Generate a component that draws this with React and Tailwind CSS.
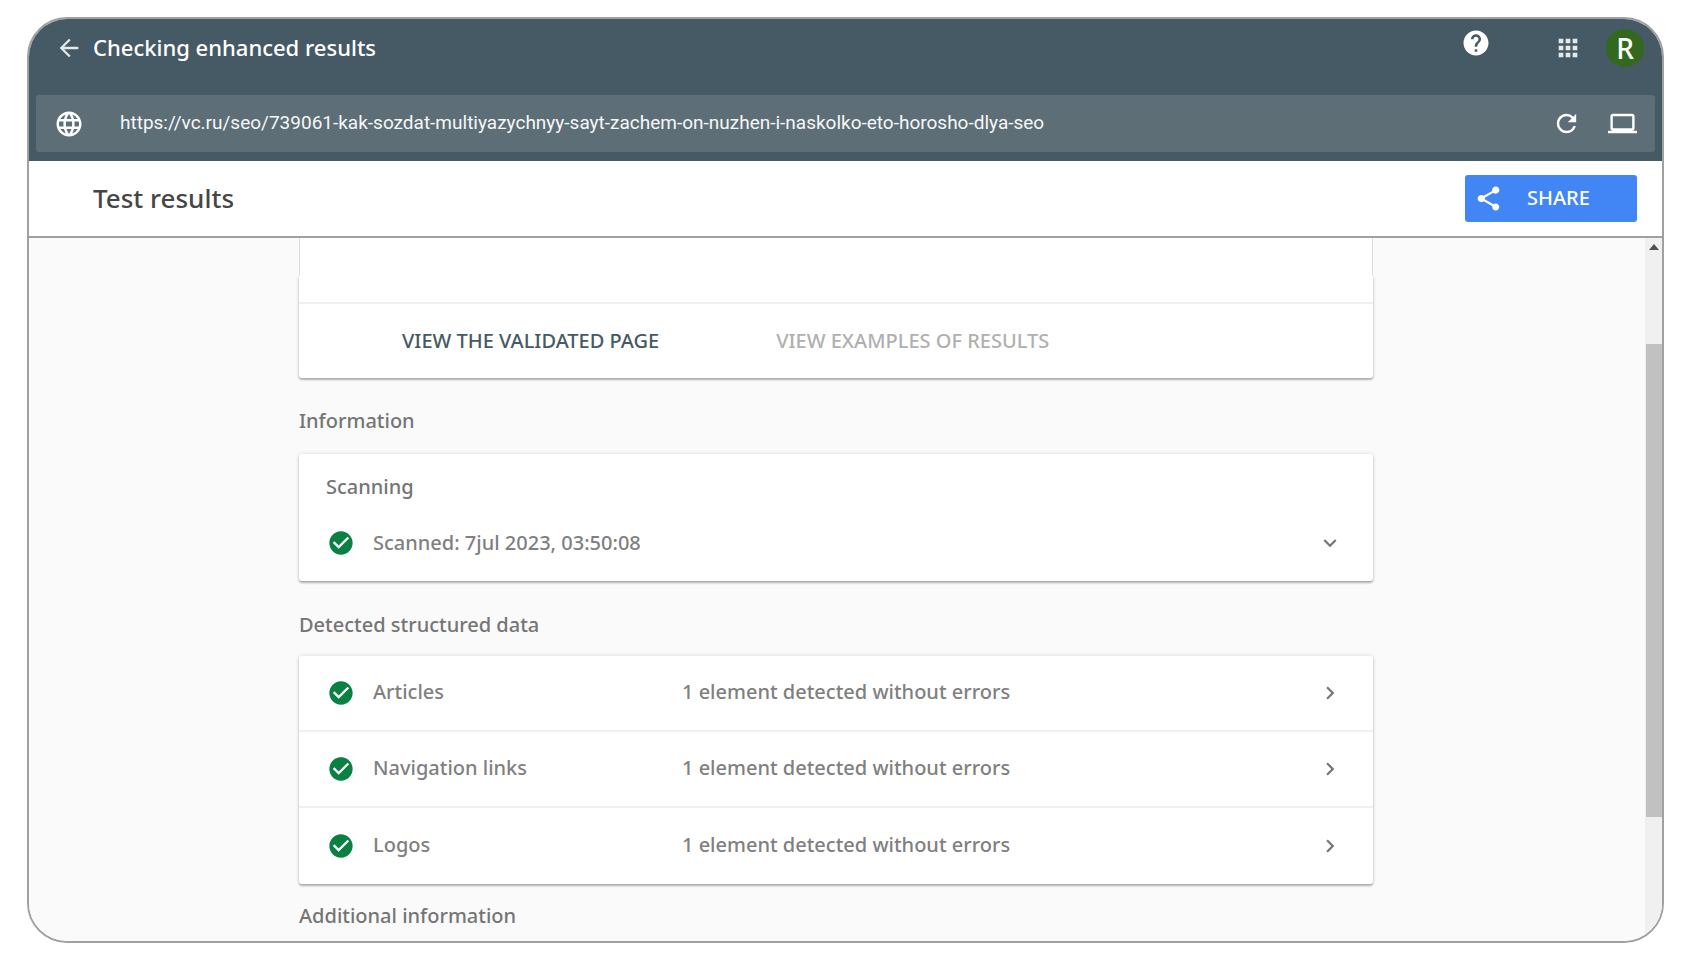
import React from 'react';
import {
    MdApps,
    MdArrowBack,
    MdCheckCircle,
    MdChevronRight,
    MdExpandMore,
    MdHelp,
    MdLanguage,
    MdLaptop,
    MdRefresh,
    MdShare,
} from "react-icons/md";

const pageUrl = "https://vc.ru/seo/739061-kak-sozdat-multiyazychnyy-sayt-zachem-on-nuzhen-i-naskolko-eto-horosho-dlya-seo";

const detectedItems = [
    { id: "articles", name: "Articles", status: "1 element detected without errors" },
    { id: "navigation", name: "Navigation links", status: "1 element detected without errors" },
    { id: "logos", name: "Logos", status: "1 element detected without errors" },
];

const cardShadow = "rounded-[3px] bg-white shadow-[0_2px_2px_rgba(0,0,0,0.26),0_0_4px_rgba(0,0,0,0.14)]";

const Header = () => {
    return (
        <header className="bg-[#455a64] px-[7px] pb-[9px] text-white">
            <div className="flex h-[58px] items-center pl-[19px] pr-[11px]">
                <button type="button" aria-label="Back" className="text-[#e3e8ea]">
                    <MdArrowBack size={28} />
                </button>
                <h1 className="ml-[10px] pb-0.5 text-[22px] font-medium leading-8">Checking enhanced results</h1>
                <div className="ml-auto flex h-full items-center">
                    <button type="button" aria-label="Help" className="mt-[9px] self-start">
                        <MdHelp size={30} />
                    </button>
                    <button type="button" aria-label="Apps" className="ml-[63px] text-[#e3e8ea]">
                        <MdApps size={28} />
                    </button>
                    <button
                        type="button"
                        aria-label="Account"
                        className="ml-6 size-[38px] rounded-full bg-[#33691e] text-[28px] font-medium leading-[38px]"
                    >
                        R
                    </button>
                </div>
            </div>

            <div className="mt-[18px] flex h-[57px] items-center rounded-[3px] bg-[#5d6e77] pl-[18px] pr-[18px]">
                <MdLanguage size={30} />
                <input
                    type="text"
                    readOnly
                    aria-label="Tested URL"
                    value={pageUrl}
                    className="ml-9 min-w-0 flex-1 bg-transparent font-['Roboto',sans-serif] text-[19px] text-[#f5f7f8] outline-none"
                />
                <button type="button" aria-label="Refresh">
                    <MdRefresh size={29} />
                </button>
                <button type="button" aria-label="Desktop view" className="ml-[27px]">
                    <MdLaptop size={29} />
                </button>
            </div>
        </header>
    );
};

const Toolbar = () => {
    return (
        <div className="flex h-[77px] items-center border-b-2 border-[#a0a0a0] bg-white pl-16 pr-[25px]">
            <h2 className="pb-0.5 text-[26px] font-medium leading-8 text-[#464646]">Test results</h2>
            <button
                type="button"
                className="ml-auto flex h-[47px] w-[172px] items-center rounded-[3px] bg-[#4285f4] pl-[9px] text-white"
            >
                <MdShare size={29} />
                <span className="ml-6 pb-0.5 text-[20px] font-medium leading-7">SHARE</span>
            </button>
        </div>
    );
};

const SectionTitle = ({ children }) => {
    return <h3 className="text-[20px] font-medium leading-7 text-[#757575]">{children}</h3>;
};

const ResultCard = () => {
    return (
        <div>
            <div className="h-[38px] border-x border-[#dcdcdc] bg-white"></div>
            {/* clipped at the top so that the shadow starts level with the frame above */}
            <div className="rounded-b-[3px] bg-white shadow-[0_2px_2px_rgba(0,0,0,0.26),0_0_4px_rgba(0,0,0,0.14)] [clip-path:inset(0_-6px_-6px_-6px)]">
                <div className="h-[28px] border-b-2 border-[#efefef]"></div>
                <div className="flex h-[74px] items-center pl-[103px] text-[20px] font-medium leading-7">
                    <button type="button" className="text-[#455a64]">VIEW THE VALIDATED PAGE</button>
                    <button type="button" disabled className="ml-[117px] text-[#b0b0b0]">VIEW EXAMPLES OF RESULTS</button>
                </div>
            </div>
        </div>
    );
};

const ScanCard = () => {
    return (
        <div className={`h-[127px] pt-[19px] ${cardShadow}`}>
            <h4 className="pl-[27px] text-[20px] font-medium leading-7 text-[#757575]">Scanning</h4>
            <button type="button" className="mt-7 flex w-full items-center pl-7 pr-[30px] text-left">
                <MdCheckCircle size={28} className="text-[#0b8043]" />
                <span className="ml-[18px] text-[20px] font-medium leading-7 text-[#808080]">Scanned: 7jul 2023, 03:50:08</span>
                <MdExpandMore size={26} className="ml-auto text-[#757575]" />
            </button>
        </div>
    );
};

const DetectedList = ({ items }) => {
    return (
        <ul className={`divide-y-2 divide-[#f0f0f0] ${cardShadow}`}>
            {items.map((item) => (
                <li key={item.id} className="h-[76px]">
                    <a href={`#${item.id}`} className="flex h-full items-center pl-7 pr-[30px] text-[20px] font-medium leading-7 text-[#808080]">
                        <MdCheckCircle size={28} className="text-[#0b8043]" />
                        <span className="ml-[18px] w-[309px] pb-[3px]">{item.name}</span>
                        <span className="pb-[3px]">{item.status}</span>
                        <MdChevronRight size={26} className="ml-auto text-[#757575]" />
                    </a>
                </li>
            ))}
        </ul>
    );
};

const ScrollTrack = () => {
    return (
        <div aria-hidden="true" className="flex w-[17px] shrink-0 flex-col bg-[#f0f0f0]">
            <div className="flex h-[17px] items-center justify-center">
                <svg width="10" height="6" viewBox="0 0 10 6">
                    <path d="M0 6 5 0l5 6z" fill="#505050" />
                </svg>
            </div>
            <div className="grow-[89] basis-0"></div>
            <div className="ml-px grow-[473] basis-0 bg-[#c1c1c1]"></div>
            <div className="grow-[124] basis-0"></div>
        </div>
    );
};

const App = () => {
    return (
        <div className="flex min-h-screen bg-white pb-4 pl-[27px] pr-7 pt-[17px] font-['Noto_Sans',sans-serif]">
            <div className="flex min-w-0 flex-1 flex-col overflow-hidden rounded-[40px] border-2 border-[#a0a0a0]">
                <Header />
                <Toolbar />
                <div className="flex flex-1 bg-[#fafafa]">
                    <main className="min-w-0 flex-1 pr-0.5">
                        <div className="mx-auto max-w-[1074px]">
                            <ResultCard />
                            <div className="pb-[19px] pt-[29px]">
                                <SectionTitle>Information</SectionTitle>
                            </div>
                            <ScanCard />
                            <div className="pb-[17px] pt-[30px]">
                                <SectionTitle>Detected structured data</SectionTitle>
                            </div>
                            <DetectedList items={detectedItems} />
                            <div className="pt-[18px]">
                                <SectionTitle>Additional information</SectionTitle>
                            </div>
                        </div>
                    </main>
                    <ScrollTrack />
                </div>
            </div>
        </div>
    );
};

export default App;
